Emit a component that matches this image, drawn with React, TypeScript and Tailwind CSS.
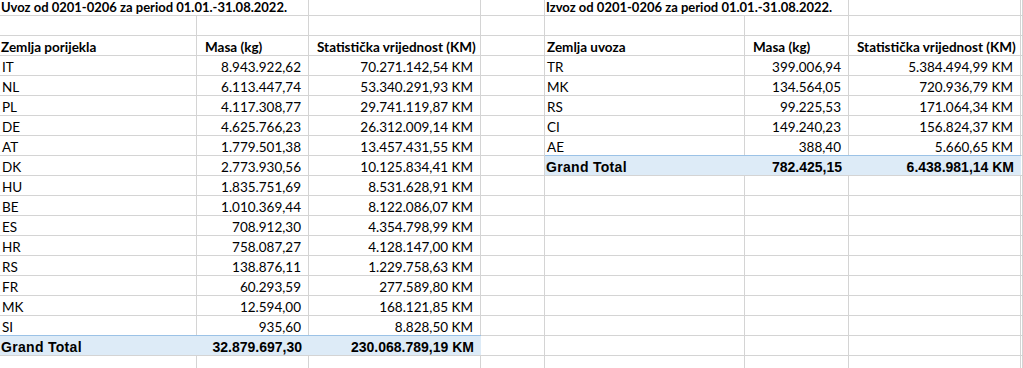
const uvoz = [
  ["IT", "8.943.922,62", "70.271.142,54 KM"],
  ["NL", "6.113.447,74", "53.340.291,93 KM"],
  ["PL", "4.117.308,77", "29.741.119,87 KM"],
  ["DE", "4.625.766,23", "26.312.009,14 KM"],
  ["AT", "1.779.501,38", "13.457.431,55 KM"],
  ["DK", "2.773.930,56", "10.125.834,41 KM"],
  ["HU", "1.835.751,69", "8.531.628,91 KM"],
  ["BE", "1.010.369,44", "8.122.086,07 KM"],
  ["ES", "708.912,30", "4.354.798,99 KM"],
  ["HR", "758.087,27", "4.128.147,00 KM"],
  ["RS", "138.876,11", "1.229.758,63 KM"],
  ["FR", "60.293,59", "277.589,80 KM"],
  ["MK", "12.594,00", "168.121,85 KM"],
  ["SI", "935,60", "8.828,50 KM"],
];

const izvoz = [
  ["TR", "399.006,94", "5.384.494,99 KM"],
  ["MK", "134.564,05", "720.936,79 KM"],
  ["RS", "99.225,53", "171.064,34 KM"],
  ["CI", "149.240,23", "156.824,37 KM"],
  ["AE", "388,40", "5.660,65 KM"],
];

type Cell = {
  text?: string;
  kind?: "title" | "head" | "headLeft" | "left" | "num" | "total" | "totalNum";
  noRight?: boolean;
  total?: boolean;
};

function SheetCell({ cell, first }: { cell: Cell; first: boolean }) {
  let cls = "";
  if (cell.kind === "title") cls = "font-bold pl-[1px] whitespace-nowrap";
  if (cell.kind === "headLeft") cls = "font-bold pl-[2px] whitespace-nowrap";
  if (cell.kind === "head") cls = "font-bold pl-2 whitespace-nowrap";
  if (cell.kind === "left") cls = "pl-[2px]";
  if (cell.kind === "num") cls = "text-right pr-[7px] whitespace-nowrap";
  if (cell.kind === "total")
    cls = "font-['Liberation_Sans',Arial,sans-serif] font-bold text-[14px] tracking-[0.3px] pl-[1px] whitespace-nowrap";
  if (cell.kind === "totalNum")
    cls = "font-['Liberation_Sans',Arial,sans-serif] font-bold text-[14px] text-right pr-[7px] whitespace-nowrap";

  return (
    <div
      className={
        "box-border border-b border-[#d4d4d4] " +
        (first ? "h-[16px] leading-[15px] text-[13px] " : "h-[20px] leading-[20px] ") +
        (cell.noRight ? "" : "border-r ") +
        (cell.total ? "bg-[#ddebf7] border-t border-t-[#9bc2e6] -mt-px h-[21px] " : "") +
        cls
      }
    >
      <div className={first ? "" : "pt-[1px]"}>{cell.text}</div>
    </div>
  );
}

export default function App() {
  const rows: Cell[][] = [];

  // naslovi
  rows.push([
    { text: "Uvoz od 0201-0206 za period 01.01.-31.08.2022.", kind: "title", noRight: true },
    {},
    {},
    {},
    { text: "Izvoz od 0201-0206 za period 01.01.-31.08.2022.", kind: "title", noRight: true },
    {},
    {},
    {},
  ]);
  rows.push([{}, {}, {}, {}, {}, {}, {}, {}]);
  rows.push([
    { text: "Zemlja porijekla", kind: "title" },
    { text: "Masa (kg)", kind: "head" },
    { text: "Statistička vrijednost (KM)", kind: "head" },
    {},
    { text: "Zemlja uvoza", kind: "headLeft" },
    { text: "Masa (kg)", kind: "head" },
    { text: "Statistička vrijednost (KM)", kind: "head" },
    {},
  ]);

  for (let i = 0; i < 16; i++) {
    const r: Cell[] = [];
    if (i < 14) {
      const u = uvoz[i];
      r.push({ text: u[0], kind: "left" }, { text: u[1], kind: "num" }, { text: u[2], kind: "num" });
    } else if (i === 14) {
      r.push(
        { text: "Grand Total", kind: "total", total: true, noRight: true },
        { text: "32.879.697,30", kind: "totalNum", total: true, noRight: true },
        { text: "230.068.789,19 KM", kind: "totalNum", total: true, noRight: true },
      );
    } else {
      r.push({}, {}, {});
    }
    r.push({});
    if (i < 5) {
      const z = izvoz[i];
      r.push({ text: z[0], kind: "left" }, { text: z[1], kind: "num" }, { text: z[2], kind: "num" });
    } else if (i === 5) {
      r.push(
        { text: "Grand Total", kind: "total", total: true, noRight: true },
        { text: "782.425,15", kind: "totalNum", total: true, noRight: true },
        { text: "6.438.981,14 KM", kind: "totalNum", total: true, noRight: true },
      );
    } else {
      r.push({}, {}, {});
    }
    r.push({});
    rows.push(r);
  }

  return (
    <div className="w-[1023px] h-[368px] overflow-hidden bg-white text-black font-[Lato,sans-serif] text-[13.5px]">
      <div className="grid grid-cols-[197px_112px_172px_64px_200px_104px_172px_2px]">
        {rows.map((r, ri) =>
          r.map((c, ci) => <SheetCell key={ri + "-" + ci} cell={c} first={ri === 0} />),
        )}
      </div>
    </div>
  );
}
